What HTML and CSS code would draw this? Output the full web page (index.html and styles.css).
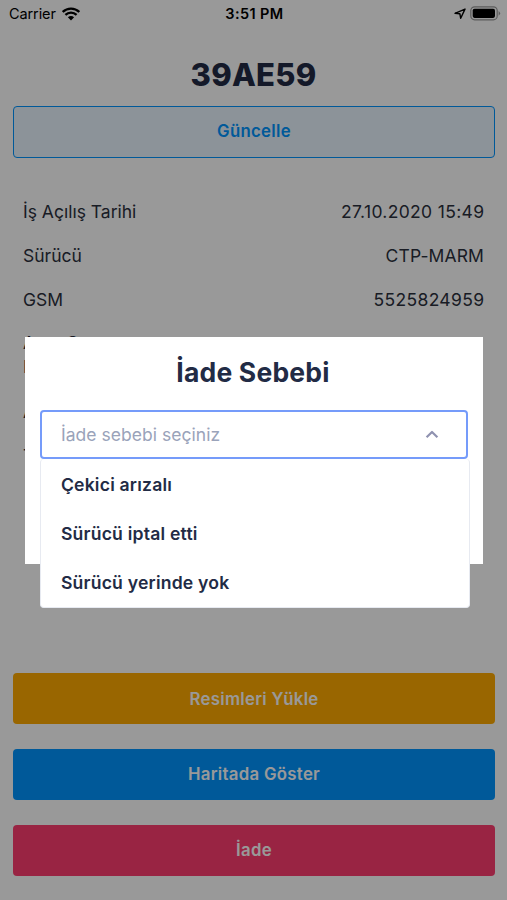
FILE: index.html
```html
<!DOCTYPE html>
<html lang="tr">
<head>
<meta charset="utf-8">
<title>39AE59</title>
<link rel="stylesheet" href="styles.css">
</head>
<body>
<main class="screen">
  <header class="status">
    <div class="status-left"><span>Carrier</span>
      <svg class="wifi" width="18" height="14" viewBox="0 0 18 14" fill="none" stroke="#000" stroke-width="2.3"><path d="M.7 4.900C5.300.500 12.700.500 17.300 4.900M3.400 7.900C6.600 4.900 11.400 4.900 14.600 7.900"/><path d="M5.900 10.300Q9 7.600 12.100 10.300L9 13.400Z" fill="#000" stroke="none"/></svg>
    </div>
    <span class="time">3:51 PM</span>
    <div class="status-right">
      <svg width="12" height="12" viewBox="0 0 12 12" fill="none" stroke="#000" stroke-width="1.4" stroke-linejoin="round"><path d="M1 5.300L11 1.100L6.700 10.300L5.900 5.800Z"/></svg>
      <svg width="31" height="15" viewBox="0 0 31 15"><rect x=".8" y=".8" width="26.400" height="13" rx="3.800" fill="none" stroke="#000" stroke-opacity=".4" stroke-width="1.200"/><rect x="2.700" y="2.700" width="22.300" height="9.200" rx="1.800"/><path d="M28.600 4.900Q31.600 7.300 28.600 9.700Z" fill-opacity=".4"/></svg>
    </div>
  </header>
  <h1 class="plate">39AE59</h1>
  <button class="btn outline">Güncelle</button>
  <section class="details">
    <div class="row"><span>İş Açılış Tarihi</span><span class="number">27.10.2020 15:49</span></div>
    <div class="row"><span>Sürücü</span><span class="code">CTP-MARM</span></div>
    <div class="row"><span>GSM</span><span class="number">5525824959</span></div>
    <div class="row tall"><span>A<span class="gap"></span>O<br>P</span></div>
    <div class="row"><span>A</span></div>
    <div class="row"><span>T</span></div>
  </section>
  <footer class="actions">
    <button class="btn orange">Resimleri Yükle</button>
    <button class="btn blue">Haritada Göster</button>
    <button class="btn pink">İade</button>
  </footer>
  <div class="overlay">
    <section class="modal">
      <h2>İade Sebebi</h2>
      <div class="select"><span>İade sebebi seçiniz</span>
        <svg width="14" height="9" viewBox="0 0 14 9" fill="none" stroke="#8f92b0" stroke-width="2.200" stroke-linejoin="round"><path d="M1.600 7.300L7 2L12.400 7.300"/></svg>
      </div>
      <ul class="menu"><li>Çekici arızalı</li><li>Sürücü iptal etti</li><li>Sürücü yerinde yok</li></ul>
    </section>
  </div>
</main>
</body>
</html>
```
FILE: styles.css
```css
* { box-sizing: border-box; }
body { margin: 0; font-family: Inter, "Liberation Sans", sans-serif; color: #222b45; }
.screen { position: relative; height: 900px; background: #fff; overflow: hidden; display: flex; flex-direction: column; }
.status { height: 27px; display: grid; grid-template-columns: 1fr auto 1fr; align-items: center; padding: 0 6px 0 9px; font-size: 14.5px; color: #000; flex: none; }
.status-left, .status-right { display: flex; align-items: center; gap: 6px; }
.status-left { letter-spacing: -.1px; }
.status-right { justify-content: flex-end; gap: 4px; }
.time { font-weight: 600; letter-spacing: .4px; margin-right: 1px; }
.plate { margin: 27px 0 0; font-size: 31px; line-height: 42px; font-weight: 800; text-align: center; letter-spacing: .25px; }
.btn { display: block; width: 482px; height: 51px; margin: 0 0 0 13px; padding: 0; border: 0; border-radius: 4px; font: 600 16.8px Inter, sans-serif; letter-spacing: .3px; color: #fff; flex: none; }
.outline { height: 52px; margin-top: 9.5px; padding-bottom: 1px; border: 1.5px solid #0095ff; background: #eaf6ff; color: #0095ff; }
.details { padding: 31.5px 23px 0; font-size: 17.5px; color: #2b303d; }
.row { height: 44px; display: flex; justify-content: space-between; line-height: 45px; }
.number { letter-spacing: .33px; margin-right: -.33px; }
.code { letter-spacing: .12px; }
.tall { height: 68px; padding: 10px 0; line-height: 24px; }
.gap { display: inline-block; width: 31px; }
.actions { margin-top: auto; padding-bottom: 24.5px; display: flex; flex-direction: column; gap: 24.6px; }
.orange { background: #ffaa00; }
.blue { background: #0095ff; }
.pink { background: #ff3d71; }
.overlay { position: absolute; inset: 0; background: rgba(0, 0, 0, .4); padding: 337px 24.5px 0 25.4px; }
.modal { height: 227px; background: #fff; padding: 14px 14.5px 0; }
.modal h2 { margin: 0 2px 0 0; text-align: center; font-size: 26.5px; line-height: 42px; font-weight: 700; letter-spacing: .2px; }
.select { margin-top: 17px; width: 428px; height: 49px; border: 2px solid #759bfa; border-radius: 4px; display: flex; align-items: center; justify-content: space-between; padding: 0 27px 1px 19px; font-size: 17.5px; letter-spacing: .04px; color: #9aa3ba; }
.menu { list-style: none; margin: 0; padding: 1px 20px 0; width: 430px; height: 149px; background: #fff; border: 1px solid #e7eaf1; border-top: 0; border-radius: 4px; font-size: 17.6px; font-weight: 600; letter-spacing: .2px; }
.menu li { height: 49px; line-height: 49px; }
```
